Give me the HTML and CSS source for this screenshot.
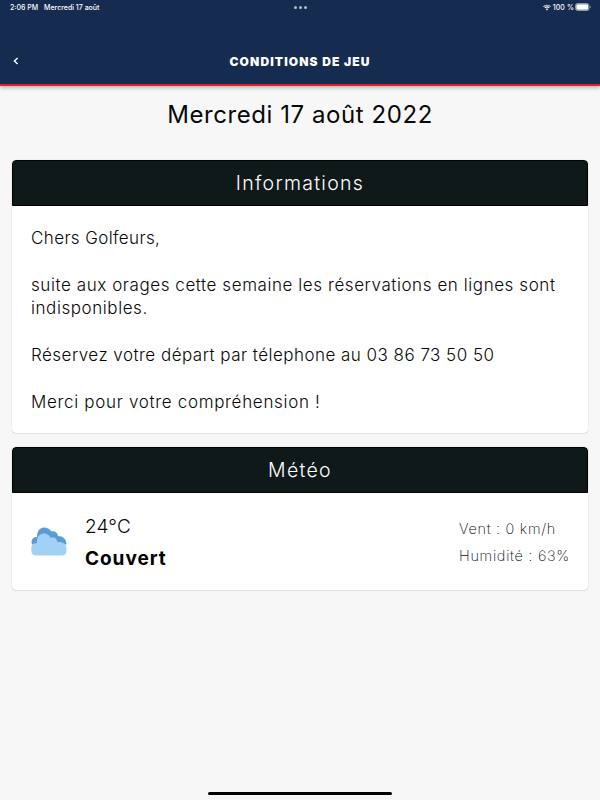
FILE: index.html
```html
<!DOCTYPE html>
<html lang="fr">
<head>
    <meta charset="utf-8">
    <title>Conditions de jeu</title>
    <meta name="viewport" content="width=device-width, initial-scale=1.0">
    <link rel="stylesheet" href="styles.css">
</head>
<body>
<header class="header">
    <div class="status-bar">
        <div class="status-left">
            <span class="time">2:06 PM</span>
            <span class="day">Mercredi 17 août</span>
        </div>
        <div class="dots"><i></i><i></i><i></i></div>
        <div class="status-right">
            <svg class="wifi" width="8" height="7" viewBox="0 0 16 13">
                <path d="M1 4.6a10.3 10.3 0 0 1 14 0M3.6 7.4a6.4 6.4 0 0 1 8.8 0" fill="none" stroke="#fff" stroke-width="2.2"/>
                <path d="M5.5 9.7a3.8 3.8 0 0 1 5 0L8 12.5z" fill="#fff"/>
            </svg>
            <span class="percent">100 %</span>
            <svg width="16" height="8" viewBox="0 0 16 8">
                <rect x=".5" y=".5" width="13.5" height="7" rx="2" fill="none" stroke="#8f99aa"/>
                <rect x="1.3" y="1.3" width="12" height="5.4" rx="1.2" fill="#fff"/>
                <path d="M14.8 2.7q1 .4 1 1.3t-1 1.3z" fill="#8f99aa"/>
            </svg>
        </div>
    </div>
    <nav class="nav-bar">
        <a class="back" href="#" aria-label="Retour">
            <svg width="6" height="8" viewBox="0 0 6 8">
                <path d="M4.6 1 1.4 4l3.2 3" fill="none" stroke="#fff" stroke-width="1.4"/>
            </svg>
        </a>
        <h1 class="nav-title">CONDITIONS DE JEU</h1>
    </nav>
</header>
<main>
    <h2 class="date">Mercredi 17 août 2022</h2>

    <section class="card">
        <h3 class="card-title">Informations</h3>
        <div class="card-body message">
            <p class="greeting">Chers Golfeurs,</p>
            <p class="notice">suite aux orages cette semaine les réservations en lignes sont<br>indisponibles.</p>
            <p class="phone">Réservez votre départ par télephone au 03 86 73 50 50</p>
            <p class="thanks">Merci pour votre compréhension !</p>
        </div>
    </section>

    <section class="card">
        <h3 class="card-title">Météo</h3>
        <div class="card-body weather">
            <svg class="cloud" width="36" height="29" viewBox="0 0 36 29">
                <path d="M1 17.5C-.5 13 2 10 6 10 6 4 9 .5 13 .5c3.6 0 6 2 7.5 4 3.5-.8 6 1.5 6.500 4.500 5 0 8.500 3 8.500 8.500z" fill="#5c9cd5"/>
                <path d="M5 28.5c-3 0-4.700-2-4.700-5v-2c0-3.500 2-5 5.700-5.500C5.500 10 8.500 6.500 13 6.500c3 0 5.500 1.500 6.500 4.500 3.500-1.500 6.500.5 6.800 4 5.200-.5 9.200 1.500 9.200 6.500v2c0 3-1.700 5-4.700 5z" fill="#a2d1f6"/>
            </svg>
            <div class="conditions">
                <div class="temperature">24°C</div>
                <div class="sky">Couvert</div>
            </div>
            <div class="details">
                <div>Vent : 0 km/h</div>
                <div>Humidité : 63%</div>
            </div>
        </div>
    </section>
</main>
<div class="home-indicator"></div>
</body>
</html>
```
FILE: styles.css
```css
* {
    box-sizing: border-box;
}

body {
    font-family: Inter, "Open Sans", sans-serif;
    color: #080808;
    background-color: #f7f7f7;
    min-height: 800px;
    margin: 0;
    display: flex;
    flex-direction: column;
}

h1, h2, h3, p {
    margin: 0;
}

.header {
    height: 86px;
    background-color: #162b50;
    border-bottom: 2px solid #e91c29;
    box-shadow: 0 2px 4px #0004;
    color: #fff;
}

.status-bar {
    display: grid;
    grid-template-columns: 1fr auto 1fr;
    align-items: center;
    height: 14px;
    padding: 0 9px 0 10px;
    font-size: 7px;
    font-weight: 500;
}

.status-left, .status-right, .dots {
    display: flex;
    align-items: center;
}

.status-left {
    gap: 6px;
}

.status-right {
    justify-content: flex-end;
    gap: 2px;
}

.percent {
    letter-spacing: .1px;
    margin-right: -1px;
}

.dots {
    gap: 2px;
}

.dots i {
    width: 3px;
    height: 3px;
    border-radius: 50%;
    background: #b4bbc6;
}

.nav-bar {
    display: grid;
    grid-template-columns: 24px 1fr 24px;
    align-items: center;
    height: 20px;
    margin-top: 37px;
    padding: 0 13px;
}

.back {
    display: flex;
}

.nav-title {
    font-size: 12px;
    font-weight: 900;
    letter-spacing: 1.12px;
    text-align: center;
}

main {
    flex: 1;
    padding: 0 12px;
}

.date {
    height: 59px;
    margin-bottom: 15px;
    font-size: 24px;
    line-height: 58px;
    font-weight: 400;
    text-align: center;
    letter-spacing: .57px;
}

.card {
    margin-bottom: 14px;
    background: #fff;
    border-radius: 4px;
    box-shadow: 0 0 1px #0005, 0 1px 1px #0001;
    overflow: hidden;
}

.card-title {
    height: 46px;
    background: #101919;
    border: 1px solid #000;
    border-radius: 4px 4px 0 0;
    color: #fff;
    font-size: 19.5px;
    line-height: 45px;
    font-weight: 300;
    text-align: center;
    letter-spacing: 1.3px;
}

.card-body {
    padding: 0 19px;
}

.message {
    height: 227px;
    padding-top: 20.5px;
    font-size: 17px;
    line-height: 23.5px;
    font-weight: 300;
    white-space: nowrap;
}

.message p {
    margin-bottom: 23.5px;
}

.greeting {
    letter-spacing: .38px;
}

.notice {
    letter-spacing: .57px;
}

.phone {
    letter-spacing: .47px;
}

.thanks {
    letter-spacing: .68px;
}

.weather {
    display: flex;
    align-items: center;
    height: 97px;
}

.conditions {
    flex: 1;
    margin: 2px 0 0 18px;
    line-height: 32px;
}

.temperature {
    font-size: 19px;
    font-weight: 300;
    letter-spacing: .2px;
}

.sky {
    font-size: 19px;
    font-weight: 700;
    letter-spacing: .95px;
    color: #000;
}

.details {
    width: 110px;
    font-size: 14.5px;
    line-height: 27px;
    font-weight: 200;
    letter-spacing: .7px;
    white-space: nowrap;
}

.home-indicator {
    width: 184px;
    height: 3px;
    margin: 0 auto 5px;
    border-radius: 2px;
    background: #000;
}
```
